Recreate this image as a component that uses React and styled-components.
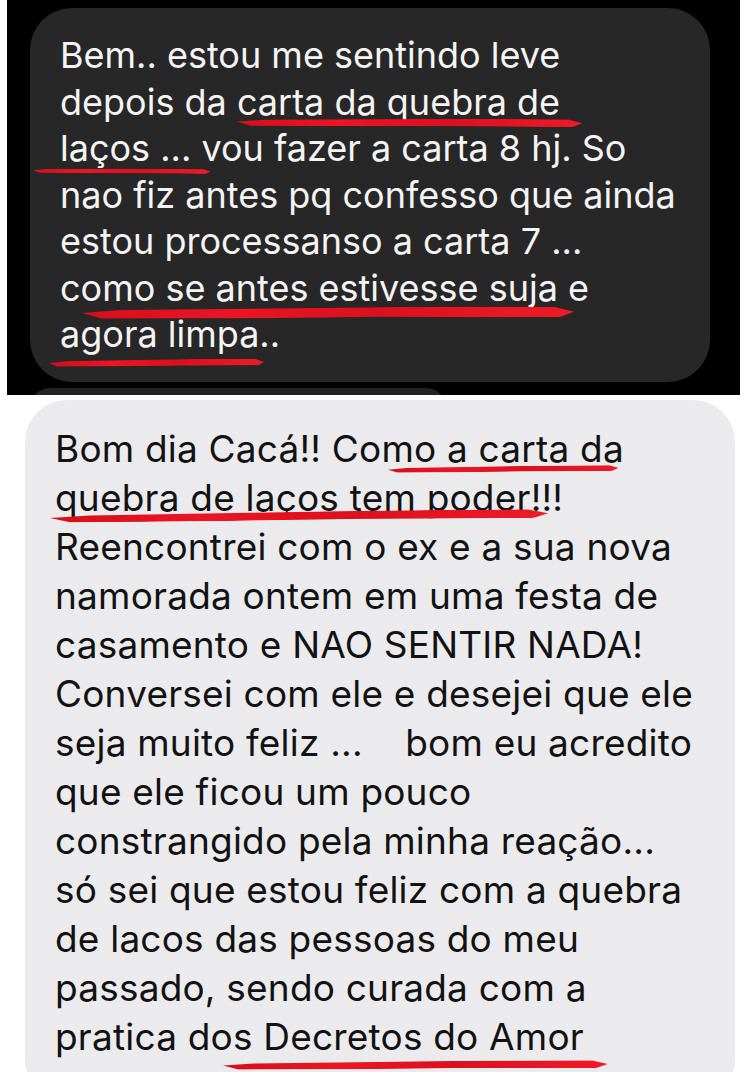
import React from 'react'
import styled, { createGlobalStyle } from 'styled-components'

const GlobalStyle = createGlobalStyle`
    html, body {
        margin: 0;
        padding: 0;
        background: #ffffff;
        overflow: hidden;
    }
    body {
        font-family: Inter, Roboto, "Liberation Sans", sans-serif;
    }
`;

const Page = styled.div`
    width: 744px;
    height: 1072px;
    overflow: hidden;
    background: #ffffff;
    display: flex;
    flex-direction: column;
`;

const DarkShot = styled.section`
    margin: 0 4px 0 7px;
    height: 395px;
    flex-shrink: 0;
    background: #000000;
    overflow: hidden;
    padding: 8px 30px 0 23px;
    box-sizing: border-box;
    display: flex;
    flex-direction: column;
    gap: 6px;
`;

const Bubble = styled.div`
    background: ${p => p.$dark ? '#272727' : '#ebebed'};
    color: ${p => p.$dark ? '#f4f4f4' : '#121212'};
    border-radius: 42px;
    padding: ${p => p.$pad};
    font-size: ${p => p.$size}px;
    line-height: ${p => p.$lh}px;
    letter-spacing: ${p => p.$ls || 0}px;
    flex-shrink: 0;
`;

const PeekBubble = styled.div`
    width: 416px;
    height: 40px;
    background: #222222;
    border-radius: 30px;
    flex-shrink: 0;
`;

const LightShot = styled.section`
    padding: 5px 9px 0 25px;
    flex: 1;
`;

const Line = styled.div`
    white-space: pre;
`;

// hand drawn red marker stroke under words
const Mark = styled.span`
    position: relative;
    &::after {
        content: '';
        position: absolute;
        left: ${p => p.$l || 0}px;
        right: ${p => p.$r || 0}px;
        bottom: ${p => p.$b || 0}px;
        height: ${p => p.$h || 5}px;
        background: linear-gradient(90deg, #d60e1b 0%, #ec1524 30%, #de0f1d 60%, #f01a28 100%);
        clip-path: polygon(0 45%, 8% 20%, 40% 10%, 70% 0, 96% 5%, 100% 50%, 97% 100%, 60% 90%, 30% 100%, 4% 95%);
        transform: rotate(${p => p.$rot || 0}deg);
        transform-origin: left center;
    }
`;

function App() {
    return (
        <Page>
            <GlobalStyle />
            <DarkShot>
                <Bubble $dark $pad="24px 30px 24px 30px" $size={36} $lh={46.5}>
                    <Line>Bem.. estou me sentindo leve</Line>
                    <Line>depois da <Mark $l={0} $r={-22} $b={-2} $h={8} $rot={0.2}>carta da quebra de</Mark></Line>
                    <Line><Mark $l={-27} $r={-9} $b={-3} $h={5} $rot={0.3}>laços ... </Mark>vou fazer a carta 8 hj. So</Line>
                    <Line>nao fiz antes pq confesso que ainda</Line>
                    <Line>estou processanso a carta 7 ...</Line>
                    <Line><Mark $l={22} $r={15} $b={-9} $h={11} $rot={-0.2}>como se antes estivesse suja e</Mark></Line>
                    <Line><Mark $l={-11} $r={16} $b={-11} $h={7} $rot={-0.4}>agora limpa..</Mark></Line>
                </Bubble>
                <PeekBubble />
            </DarkShot>
            <LightShot>
                <Bubble $pad="24px 30px 40px 30px" $size={37} $lh={49} $ls={0.2}>
                    <Line>Bom dia Cacá!! Co<Mark $l={7} $r={5} $b={-2} $h={6} $rot={-0.5}>mo a carta da</Mark></Line>
                    <Line><Mark $l={-5} $r={15} $b={-3} $h={9} $rot={-0.6}>quebra de laços tem poder!!!</Mark></Line>
                    <Line>Reencontrei com o ex e a sua nova</Line>
                    <Line>namorada ontem em uma festa de</Line>
                    <Line>casamento e NAO SENTIR NADA!</Line>
                    <Line>Conversei com ele e desejei que ele</Line>
                    <Line>seja muito feliz ...    bom eu acredito</Line>
                    <Line>que ele ficou um pouco</Line>
                    <Line>constrangido pela minha reação...</Line>
                    <Line>só sei que estou feliz com a quebra</Line>
                    <Line>de lacos das pessoas do meu</Line>
                    <Line>passado, sendo curada com a</Line>
                    <Line>pratica dos <Mark $l={-40} $r={-24} $b={-11} $h={8} $rot={-0.3}>Decretos do Amor</Mark></Line>
                </Bubble>
            </LightShot>
        </Page>
    )
}

export default App
